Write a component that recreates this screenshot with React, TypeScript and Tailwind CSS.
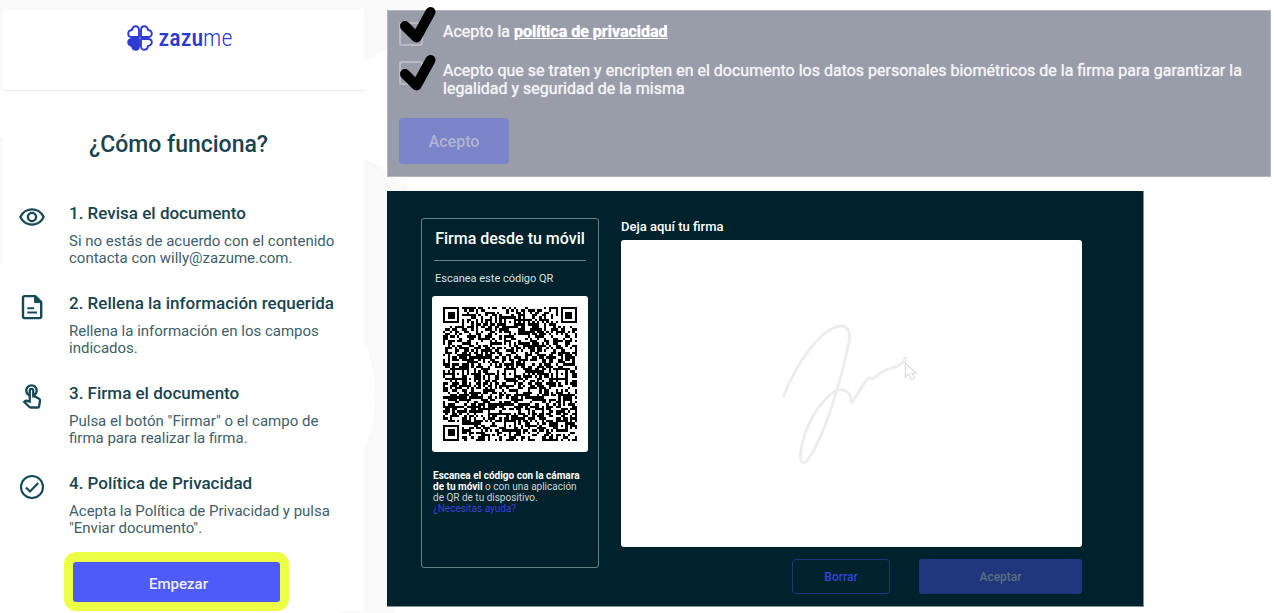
import type { ReactNode } from "react";
import { MdOutlineRemoveRedEye, MdOutlineTouchApp } from "react-icons/md";

const SIZE = 57;
const ALIGN: [number, number][] = [
  [28, 6],
  [6, 28],
  [28, 28],
  [50, 28],
  [28, 50],
  [50, 50],
];

function buildCode(): string {
  let seed = 20731;
  const random = () => {
    seed = (seed * 1103515245 + 12345) % 2147483648;
    return seed / 2147483648;
  };
  const ring = (dx: number, dy: number) => Math.max(Math.abs(dx), Math.abs(dy));
  let d = "";
  for (let y = 0; y < SIZE; y++) {
    for (let x = 0; x < SIZE; x++) {
      let on = random() < 0.52;
      if (x === 6) on = y % 2 === 0;
      if (y === 6) on = x % 2 === 0;
      for (const [cx, cy] of ALIGN) {
        const r = ring(x - cx, y - cy);
        if (r <= 2) on = r !== 1;
      }
      for (const [cx, cy] of [[3, 3], [SIZE - 4, 3], [3, SIZE - 4]]) {
        const r = ring(x - cx, y - cy);
        if (r <= 4) on = r < 2 || r === 3;
      }
      if (on) d += `M${x} ${y}h1v1h-1z`;
    }
  }
  return d;
}

const CODE = buildCode();

function DocumentIcon() {
  return (
    <svg viewBox="0 0 28 28" className="size-7" fill="none" stroke="currentColor" strokeWidth="2.4" strokeLinejoin="round">
      <path d="M6.600 3.100h10.600l6 6v14.400a1.600 1.600 0 0 1-1.600 1.600H6.600A1.600 1.600 0 0 1 5 23.500V4.700a1.600 1.600 0 0 1 1.600-1.600z" />
      <path d="M16.600 3.400v6.200h6.400z" fill="currentColor" strokeWidth="1" />
      <path d="M9.300 15.300h6.800M9.300 19.500h9.800" strokeWidth="2.100" />
    </svg>
  );
}

function CheckIcon() {
  return (
    <svg viewBox="0 0 28 28" className="size-7" fill="none" stroke="currentColor" strokeWidth="2.100">
      <circle cx="14" cy="14" r="11" />
      <path d="M8 14.500l4 4 8.200-8.500" strokeWidth="2.200" />
    </svg>
  );
}

function Leaf({ angle, filled }: { angle: number; filled?: boolean }) {
  return (
    <path
      transform={`rotate(${angle} 13 13)`}
      d="M12 12V5C12 2.500 10.500 1.200 8.700 1.200 6.800 1.200 5.400 2.600 5 5 2.600 5.400 1.200 6.800 1.200 8.700 1.200 10.500 2.500 12 5 12z"
      fill={filled ? "currentColor" : "none"}
      stroke="currentColor"
      strokeWidth="1.900"
      strokeLinejoin="round"
    />
  );
}

function Logo() {
  return (
    <div className="flex items-center gap-1.5 text-[#2d3bd3]" aria-label="zazume">
      <svg viewBox="0 0 26 26" className="size-[26px]">
        <Leaf angle={0} />
        <Leaf angle={90} />
        <Leaf angle={180} />
        <Leaf angle={270} filled />
      </svg>
      <span className="font-['Liberation_Sans_Narrow','Roboto_Condensed',sans-serif] text-2xl leading-8">
        <span className="font-medium">zazu</span>
        <span className="font-light">me</span>
      </span>
    </div>
  );
}

function Backdrop() {
  return (
    <svg className="absolute top-0 left-0 h-[613px] w-[440px]" viewBox="0 0 440 613" aria-hidden="true">
      <path d="M0 0H432Q415 38 364 61L200 90H0z" fill="#f9f9f9" />
      <path d="M0 138H3V265H0z" fill="#f9f9f9" />
      <path d="M364 158Q395 175 412 191L430 400 395 613H340V158z" fill="#f9f9f9" />
      <ellipse cx="300" cy="395" rx="75" ry="105" fill="#fff" />
    </svg>
  );
}

function Step({ icon, title, children }: { icon: ReactNode; title: string; children: ReactNode }) {
  return (
    <li className="flex h-[90px] items-start gap-[23px]">
      <span className="pt-0.5 text-[#174a58]">{icon}</span>
      <div>
        <h2 className="text-[17px] leading-6 font-medium text-[#1a4450]">{title}</h2>
        <p className="mt-2 text-[15px] leading-[17px] text-[#40606b]">{children}</p>
      </div>
    </li>
  );
}

function Consent({ id, markClass, children }: { id: string; markClass: string; children: ReactNode }) {
  return (
    <div className="flex items-start gap-5">
      <div className="relative size-6 shrink-0">
        <input
          id={id}
          type="checkbox"
          defaultChecked
          className="peer block size-6 appearance-none rounded-[3px] border-2 border-[#b9bcc5]"
        />
        <svg
          viewBox="0 0 36 36"
          className={`pointer-events-none absolute left-0 hidden size-9 overflow-visible peer-checked:block ${markClass}`}
          fill="none"
          stroke="#000"
          strokeWidth="10"
          strokeLinecap="round"
          strokeLinejoin="round"
        >
          <path d="M6 19L17.500 30.500 31.500 5" />
        </svg>
      </div>
      <label htmlFor={id} className="pt-px text-base leading-[18px] text-[#f2f3f5] [text-shadow:0_0_1px_#f2f3f5]">
        {children}
      </label>
    </div>
  );
}

export default function App() {
  return (
    <div className="relative min-h-screen overflow-x-hidden bg-white font-[Roboto,sans-serif]">
      <Backdrop />
      <div className="relative flex items-start gap-[23px] pt-2.5 pr-[3px] pl-[3px]">
        <aside className="w-[361px] shrink-0 bg-white">
          <header className="flex h-[81px] items-start justify-center border-b border-[#ebebeb] pt-3 pr-2">
            <Logo />
          </header>
          <h1 className="mt-9 pr-2.5 text-center text-[23px] leading-9 font-medium text-[#1a4450]">¿Cómo funciona?</h1>
          <ol className="mt-[38px] pl-[15px]">
            <Step icon={<MdOutlineRemoveRedEye className="size-7" />} title="1. Revisa el documento">
              Si no estás de acuerdo con el contenido
              <br />
              contacta con willy@zazume.com.
            </Step>
            <Step icon={<DocumentIcon />} title="2. Rellena la información requerida">
              Rellena la información en los campos
              <br />
              indicados.
            </Step>
            <Step icon={<MdOutlineTouchApp className="size-7" />} title="3. Firma el documento">
              Pulsa el botón "Firmar" o el campo de
              <br />
              firma para realizar la firma.
            </Step>
            <Step icon={<CheckIcon />} title="4. Política de Privacidad">
              Acepta la Política de Privacidad y pulsa
              <br />
              "Enviar documento".
            </Step>
          </ol>
          <div className="-mt-[9px] ml-[61px] w-[225px] rounded-xl bg-[#edff45] px-[9px] pt-2.5 pb-[9px]">
            <button className="h-10 w-full rounded-[3px] bg-[#4f5bf9] pt-1 pl-1 text-[15px] font-medium text-[#eceeff]">
              Empezar
            </button>
          </div>
        </aside>

        <main className="flex min-w-0 flex-1 flex-col gap-3.5">
          <section className="border border-[#b3b7bf] bg-[#999da9] px-[11px] pt-[11px] pb-3">
            <div className="flex flex-col gap-[15px]">
              <Consent id="privacy" markClass="-top-[15px]">
                Acepto la{" "}
                <a href="#privacidad" className="font-bold text-white underline">
                  política de privacidad
                </a>
              </Consent>
              <Consent id="biometric" markClass="-top-1.5">
                Acepto que se traten y encripten en el documento los datos personales biométricos de la firma para
                garantizar la legalidad y seguridad de la misma
              </Consent>
            </div>
            <button className="mt-5 block h-[46px] w-[110px] rounded bg-[#7b83c9] pt-0.5 text-base font-medium text-[#b0b5d3]">
              Acepto
            </button>
          </section>

          <section className="flex w-full max-w-[757px] gap-[22px] border-r border-b border-[#7d9296] bg-[#00222d] pt-[27px] pr-[61px] pb-3 pl-[34px]">
            <div className="h-[350px] w-[178px] shrink-0 rounded-[3px] border border-[#688086] px-2.5 pt-2">
              <h2 className="mx-0.5 border-b border-[#688086] pb-[9px] text-center text-base leading-6 font-medium whitespace-nowrap text-white">
                Firma desde tu móvil
              </h2>
              <p className="pt-3 pl-[3px] text-[11px] leading-3 text-[#d8e0e2]">Escanea este código QR</p>
              <div className="mt-[11px] w-[156px] rounded-[3px] bg-white p-[11px]">
                <svg viewBox="0 0 57 57" className="block size-[134px]" shapeRendering="crispEdges" role="img" aria-label="Código QR">
                  <path d={CODE} fill="#000" />
                </svg>
              </div>
              <p className="mt-[18px] pl-px text-[10px] leading-[11px] whitespace-nowrap text-[#cdd6d8]">
                <b className="text-white">Escanea el código con la cámara</b>
                <br />
                <b className="text-white">de tu móvil</b> o con una aplicación
                <br />
                de QR de tu dispositivo.
                <br />
                <a href="#ayuda" className="text-[#3840d8]">
                  ¿Necesitas ayuda?
                </a>
              </p>
            </div>

            <div className="min-w-0 flex-1">
              <h2 className="text-[13px] leading-[18px] font-medium text-white">Deja aquí tu firma</h2>
              <div className="mt-1 h-[307px] rounded-[3px] bg-white">
                <svg viewBox="0 0 462 307" className="mx-auto block h-full max-w-full" fill="none">
                  <g stroke="#ededed" strokeWidth="3" strokeLinecap="round" strokeLinejoin="round">
                    <path d="M163 156C175 125 199 89 219 86C228 85 231 93 228 105C223 128 206 195 187 220C183 226 179 221 180 214C182 187 201 159 215 151C225 146 231 154 231 163L246 140C248 136 250 139 252 139C256 138 257 133 263 131C272 127 282 127 285 118" />
                  </g>
                  <path d="M285 123v14l3.200-3 2.800 5.500 3-1.500-2.500-5h4z" fill="#fff" stroke="#dedede" strokeWidth="1.300" />
                </svg>
              </div>
              <div className="mt-3 flex justify-end gap-[29px] text-xs font-medium">
                <button className="h-[35px] w-[98px] rounded border border-[#1e377c] text-[#3645d6]">Borrar</button>
                <button className="h-[35px] w-[163px] rounded-[3px] bg-[#20377d] text-[#59707f]">Aceptar</button>
              </div>
            </div>
          </section>
        </main>
      </div>
    </div>
  );
}
